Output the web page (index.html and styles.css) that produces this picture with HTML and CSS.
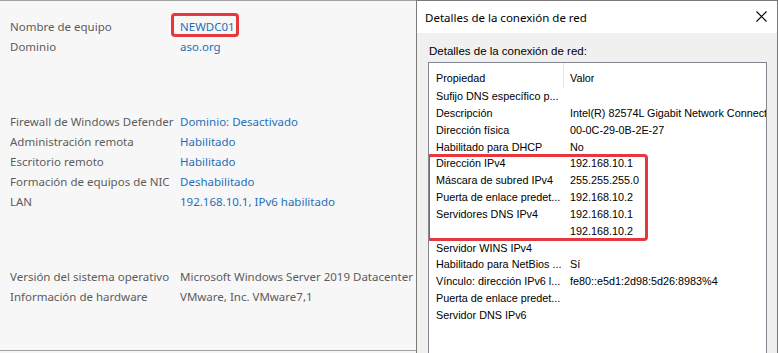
FILE: index.html
```html
<!DOCTYPE html>
<html lang="es">
<head>
  <meta charset="UTF-8">
  <meta name="viewport" content="width=device-width, initial-scale=1.0">
  <title>Servidor local - Detalles de la conexión de red</title>
  <link rel="stylesheet" href="styles.css">
</head>
<body>
  <div class="screen">
    <section class="server">
      <div class="group first">
        <div class="row"><span class="key">Nombre de equipo</span><span class="val link"><span class="marked">NEWDC01</span></span></div>
        <div class="row"><span class="key">Dominio</span><span class="val link">aso.org</span></div>
      </div>
      <div class="group">
        <div class="row"><span class="key">Firewall de Windows Defender</span><span class="val link">Dominio: Desactivado</span></div>
        <div class="row"><span class="key">Administración remota</span><span class="val link">Habilitado</span></div>
        <div class="row"><span class="key">Escritorio remoto</span><span class="val link">Habilitado</span></div>
        <div class="row"><span class="key">Formación de equipos de NIC</span><span class="val link">Deshabilitado</span></div>
        <div class="row"><span class="key">LAN</span><span class="val link">192.168.10.1, IPv6 habilitado</span></div>
      </div>
      <div class="group">
        <div class="row"><span class="key">Versión del sistema operativo</span><span class="val">Microsoft Windows Server 2019 Datacenter</span></div>
        <div class="row"><span class="key">Información de hardware</span><span class="val">VMware, Inc. VMware7,1</span></div>
      </div>
    </section>

    <div class="dialog">
      <div class="titlebar">
        <span>Detalles de la conexión de red</span>
        <svg class="close" width="11" height="11" viewBox="0 0 11 11">
          <path d="M0.5 0.5 L10.5 10.5 M10.5 0.5 L0.5 10.5" stroke="#000" stroke-width="1.1" fill="none"/>
        </svg>
      </div>
      <div class="dialog-body">
        <p class="caption">Detalles de la conexión de red:</p>
        <div class="listview">
          <div class="lv-head"><span class="c1">Propiedad</span><span class="c2">Valor</span></div>
          <div class="lv-row"><span class="c1">Sufijo DNS específico p...</span><span class="c2"></span></div>
          <div class="lv-row"><span class="c1">Descripción</span><span class="c2">Intel(R) 82574L Gigabit Network Connect</span></div>
          <div class="lv-row"><span class="c1">Dirección física</span><span class="c2">00-0C-29-0B-2E-27</span></div>
          <div class="lv-row"><span class="c1">Habilitado para DHCP</span><span class="c2">No</span></div>
          <div class="lv-row"><span class="c1">Dirección IPv4</span><span class="c2">192.168.10.1</span></div>
          <div class="lv-row"><span class="c1">Máscara de subred IPv4</span><span class="c2">255.255.255.0</span></div>
          <div class="lv-row"><span class="c1">Puerta de enlace predet...</span><span class="c2">192.168.10.2</span></div>
          <div class="lv-row"><span class="c1">Servidores DNS IPv4</span><span class="c2">192.168.10.1</span></div>
          <div class="lv-row"><span class="c1"></span><span class="c2">192.168.10.2</span></div>
          <div class="lv-row"><span class="c1">Servidor WINS IPv4</span><span class="c2"></span></div>
          <div class="lv-row"><span class="c1">Habilitado para NetBios ...</span><span class="c2">Sí</span></div>
          <div class="lv-row"><span class="c1">Vínculo: dirección IPv6 l...</span><span class="c2">fe80::e5d1:2d98:5d26:8983%4</span></div>
          <div class="lv-row"><span class="c1">Puerta de enlace predet...</span><span class="c2"></span></div>
          <div class="lv-row"><span class="c1">Servidor DNS IPv6</span><span class="c2"></span></div>
          <div class="callout"></div>
        </div>
      </div>
    </div>
  </div>
</body>
</html>
```

FILE: styles.css
```css
* { box-sizing: border-box; }
body { margin: 0; background: #f7f7f7; overflow: hidden; }
.screen { display: flex; width: 778px; height: 353px; }

/* panel de propiedades del servidor */
.server { width: 416px; height: 351px; flex: none; overflow: hidden; background: #f7f7f7; border-top: 1px solid #a0a0a0; border-bottom: 1px solid #a0a0a0; padding: 16px 0 0 10px; font-family: "Noto Sans", sans-serif; font-size: 11.5px; }
.group { margin-bottom: 55.5px; }
.row { display: flex; height: 19.9px; line-height: 19.9px; white-space: nowrap; }
.key { width: 170px; flex: none; color: #5c5c5c; }
.val { color: #5c5c5c; }
.link { color: #1e6fba; }
.marked { position: relative; display: inline-block; height: 19.9px; }
.marked::after { content: ""; position: absolute; top: -4px; bottom: 0; left: -9px; right: -4px; border: 3px solid #e8363d; border-radius: 4px; }

/* ventana de detalles */
.dialog { flex: 1; min-width: 0; height: 353px; overflow: hidden; border: 1px solid #7a7a7a; border-bottom: none; background: #f0f0f0; display: flex; flex-direction: column; }
.titlebar { height: 32px; flex: none; background: #fff; display: flex; align-items: center; justify-content: space-between; padding: 0 10px 0 8px; font-family: "Noto Sans", sans-serif; font-size: 11.5px; color: #000; }
.close { margin-bottom: 1px; }
.dialog-body { flex: 1; min-height: 0; padding: 11px 10px 0 11px; display: flex; flex-direction: column; font-family: "Liberation Sans", Arial, sans-serif; font-size: 10.8px; color: #000; }
.caption { margin: 0 0 4px 1px; font-size: 11.5px; line-height: 14px; }
.listview { position: relative; flex: 1; min-width: 0; background: #fff; border: 1px solid #828790; border-bottom: none; overflow: hidden; }
.lv-head { display: flex; height: 25px; padding-top: 7px; line-height: 17px; }
.lv-head .c1 { border-right: 1px solid #e5e5e5; margin-top: -7px; padding-top: 7px; height: 25px; }
.lv-row { display: flex; height: 16.85px; line-height: 16.85px; }
.c1 { width: 135px; flex: none; padding-left: 7px; white-space: nowrap; overflow: hidden; }
.c2 { padding-left: 6px; white-space: nowrap; overflow: hidden; }
.callout { position: absolute; left: -2px; top: 91px; width: 221px; height: 87px; border: 3px solid #e8363d; border-radius: 4px; }
```
